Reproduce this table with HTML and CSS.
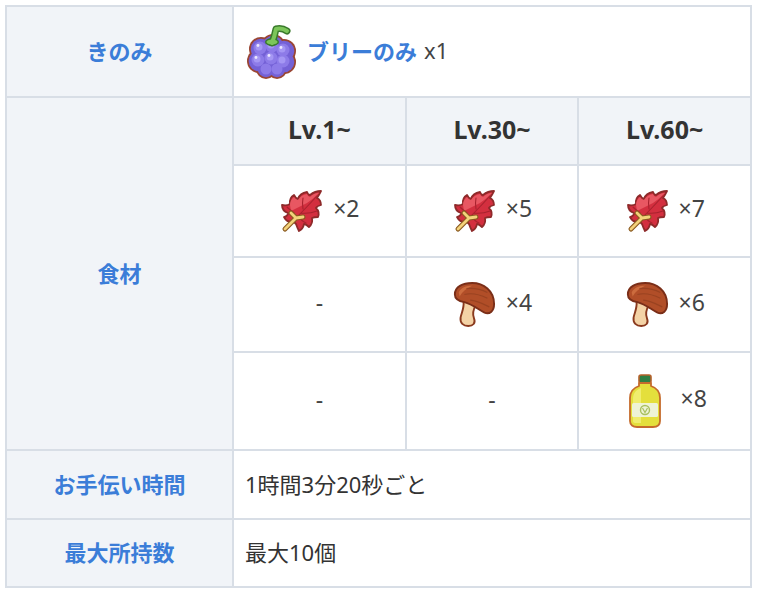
FILE: index.html
```html
<!DOCTYPE html>
<html lang="ja">
<head>
<meta charset="utf-8">
<title>ブリーのみ</title>
<link rel="stylesheet" href="styles.css">
</head>
<body>
<table class="info">
  <colgroup>
    <col class="c-label">
    <col class="c-lv">
    <col class="c-lv">
    <col class="c-lv">
  </colgroup>
  <tr class="r-berry">
    <th class="label">きのみ</th>
    <td class="value" colspan="3">
      <div class="berry">
        <svg class="ic-berry" viewBox="0 0 54 54" width="54" height="54">
          <g fill="#9a4634">
            <circle cx="16" cy="24" r="12"/><circle cx="28" cy="21" r="12"/><circle cx="39" cy="26" r="12"/>
            <circle cx="14" cy="36" r="12"/><circle cx="27" cy="35" r="12"/><circle cx="39" cy="37" r="12"/>
            <circle cx="21" cy="44" r="10"/><circle cx="32" cy="44" r="10"/>
          </g>
          <g fill="#7461d6">
            <circle cx="16" cy="24" r="10.3"/><circle cx="28" cy="21" r="10.3"/><circle cx="39" cy="26" r="10.3"/>
            <circle cx="14" cy="36" r="10.3"/><circle cx="27" cy="35" r="10.3"/><circle cx="39" cy="37" r="10.3"/>
            <circle cx="21" cy="44" r="8.3"/><circle cx="32" cy="44" r="8.3"/>
          </g>
          <g fill="#8d7be8">
            <circle cx="15" cy="23" r="6.5"/><circle cx="27" cy="21" r="6.5"/><circle cx="38" cy="25" r="6.5"/>
            <circle cx="13" cy="35" r="6.5"/><circle cx="26" cy="33" r="6.5"/><circle cx="38" cy="36" r="6.5"/>
            <circle cx="21" cy="44" r="5.5"/><circle cx="32" cy="44" r="5.5"/>
          </g>
          <g fill="#a597f4">
            <circle cx="14" cy="22" r="3.5"/><circle cx="26" cy="20" r="3.5"/><circle cx="37" cy="24" r="3.5"/>
            <circle cx="12" cy="34" r="3.5"/><circle cx="25" cy="32" r="3.5"/><circle cx="37" cy="35" r="3.5"/>
          </g>
          <g fill="#ece8ff">
            <circle cx="13" cy="20.5" r="1.4"/><circle cx="25" cy="18.5" r="1.4"/><circle cx="36" cy="22.5" r="1.4"/>
            <circle cx="11" cy="32.5" r="1.4"/><circle cx="24" cy="30.5" r="1.4"/>
          </g>
          <path d="M27 18 C29 13 30 9 31 4 C35 3 39 4 42 6" fill="none" stroke="#3a7a2c" stroke-width="7" stroke-linecap="round" stroke-linejoin="round"/>
          <ellipse cx="27" cy="17" rx="7" ry="4" fill="#3a7a2c"/>
          <path d="M27 18 C29 13 30 9 31 4 C35 3 39 4 42 6" fill="none" stroke="#7cc65a" stroke-width="4" stroke-linecap="round" stroke-linejoin="round"/>
          <ellipse cx="27" cy="17" rx="5.5" ry="2.6" fill="#7cc65a"/>
        </svg>
        <span class="berry-name">ブリーのみ</span><span class="qty">x1</span>
      </div>
    </td>
  </tr>
  <tr class="r-lv">
    <th class="label" rowspan="4">食材</th>
    <th class="lv">Lv.1~</th>
    <th class="lv">Lv.30~</th>
    <th class="lv">Lv.60~</th>
  </tr>
  <tr class="r-ing1">
    <td class="ing"><div class="item"><svg class="ic-leaf" viewBox="0 0 44 44" width="44" height="44"><use href="#leaf"/></svg><span>×2</span></div></td>
    <td class="ing"><div class="item"><svg class="ic-leaf" viewBox="0 0 44 44" width="44" height="44"><use href="#leaf"/></svg><span>×5</span></div></td>
    <td class="ing"><div class="item"><svg class="ic-leaf" viewBox="0 0 44 44" width="44" height="44"><use href="#leaf"/></svg><span>×7</span></div></td>
  </tr>
  <tr class="r-ing2">
    <td class="ing dash">-</td>
    <td class="ing"><div class="item"><svg class="ic-mush" viewBox="-1 -1 46 48" width="44" height="46"><use href="#mush"/></svg><span>×4</span></div></td>
    <td class="ing"><div class="item"><svg class="ic-mush" viewBox="-1 -1 46 48" width="44" height="46"><use href="#mush"/></svg><span>×6</span></div></td>
  </tr>
  <tr class="r-ing3">
    <td class="ing dash">-</td>
    <td class="ing dash">-</td>
    <td class="ing"><div class="item"><svg class="ic-oil" viewBox="0 0 44 56" width="44" height="56"><use href="#oil"/></svg><span>×8</span></div></td>
  </tr>
  <tr class="r-time">
    <th class="label">お手伝い時間</th>
    <td class="value" colspan="3">1時間3分20秒ごと</td>
  </tr>
  <tr class="r-max">
    <th class="label">最大所持数</th>
    <td class="value" colspan="3">最大10個</td>
  </tr>
</table>

<svg class="defs" width="0" height="0" aria-hidden="true">
  <defs>
    <g id="leaf">
      <path d="M15 33 Q8 34 5 28 Q9 27 9 24 Q3 22 3 16 Q8 17 11 15 Q10 9 15 6 Q17 10 19 10 Q21 4 28 3 Q29 6 31 6 Q36 2 42 2 Q40 6 38 9 Q42 11 42 16 Q38 17 37 19 Q41 23 39 28 Q35 28 33 29 Q34 35 30 38 Q27 35 25 35 Q24 40 20 42 Q18 38 17 35 Z" fill="#d32f3f" stroke="#8e2a2a" stroke-width="1.8" stroke-linejoin="round"/>
      <path d="M11 16 Q11 11 15 8 Q17 11 19 11 Q22 6 28 5 Q29 8 31 8 Q35 4 40 4 Q34 10 28 14 Q20 18 12 22 Z" fill="#e85762"/>
      <path d="M17 29 Q26 20 38 7 M22 24 Q30 25 38 22 M20 27 Q22 32 27 34 M15 24 Q10 20 8 18 M24 20 Q23 14 24 9" fill="none" stroke="#a8222e" stroke-width="1.1" stroke-linecap="round"/>
      <path d="M6 40 L17 29 M17 29 L12 24 M17 29 L24 28" fill="none" stroke="#8a5a20" stroke-width="5" stroke-linecap="round"/>
      <path d="M6 40 L17 29 M17 29 L12 24 M17 29 L24 28" fill="none" stroke="#f3d27a" stroke-width="2.8" stroke-linecap="round"/>
    </g>
    <g id="mush">
      <path d="M11 19 C12 26 9 31 8 36 C7 42 11 45 16 45 C21 45 24 42 22 37 C20 32 21 28 24 23 Z" fill="#f4d3a6" stroke="#8a3a1e" stroke-width="2" stroke-linejoin="round"/>
      <path d="M2 12 C2 4 10 0 20 0 C32 0 43 8 43 22 C43 30 38 33 33 31 C27 28 20 22 12 20 C6 19 2 17 2 12 Z" fill="#b14e28" stroke="#7a2e18" stroke-width="2" stroke-linejoin="round"/>
      <path d="M6 10 C8 5 14 3 20 3 C14 6 10 9 7 14 Z" fill="#cc6c3e"/>
      <path d="M12 12 C20 10 28 12 36 16 M18 18 C24 18 30 21 38 25 M14 6 C22 5 30 7 36 10" fill="none" stroke="#94401f" stroke-width="1.3" opacity="0.8"/>
    </g>
    <g id="oil">
      <rect x="16" y="2" width="12" height="8" rx="2" fill="#2f7f44" stroke="#b5612a" stroke-width="1.6"/>
      <path d="M16 10 L28 10 L28 13 C34 15 37 19 37 25 L37 48 C37 52 34 54 30 54 L14 54 C10 54 7 52 7 48 L7 25 C7 19 10 15 16 13 Z" fill="#e4df3c" stroke="#c56b2c" stroke-width="1.8" stroke-linejoin="round"/>
      <path d="M10 26 C10 20 13 17 18 15 L18 50 L12 50 C11 50 10 49 10 48 Z" fill="#f3f07a" opacity="0.8"/>
      <rect x="9" y="30" width="26" height="14" rx="1.5" fill="#eef3d6"/>
      <circle cx="22" cy="37" r="4.5" fill="none" stroke="#a9c060" stroke-width="1.4"/>
      <path d="M19.5 35 L22 39.5 L24.5 35" fill="none" stroke="#a9c060" stroke-width="1.2"/>
    </g>
  </defs>
</svg>
</body>
</html>
```

FILE: styles.css
```css
html, body {
  margin: 0;
  padding: 0;
  background: #ffffff;
}
body {
  padding: 5px 0 0 5px;
  font-family: "Noto Sans", "Noto Sans CJK JP", sans-serif;
  color: #333333;
}
.info {
  border-collapse: collapse;
  table-layout: fixed;
  width: 747px;
}
.c-label { width: 227px; }
.info th, .info td {
  border: 2px solid #d8dee6;
  padding: 0 0 4px 0;
  vertical-align: middle;
}
.label {
  background: #f1f4f8;
  color: #3b7dd8;
  font-weight: 700;
  font-size: 22px;
  text-align: center;
}
.info .value {
  text-align: left;
  padding-left: 11px;
  font-size: 22px;
  color: #333333;
}
.info .r-berry .value { padding-bottom: 0; }
.r-berry { height: 91px; }
.r-lv { height: 68px; }
.r-ing1 { height: 92px; }
.r-ing2 { height: 95px; }
.r-ing3 { height: 98px; }
.r-time { height: 69px; }
.r-max { height: 68px; }
.berry {
  display: flex;
  align-items: center;
}
.ic-berry { margin-right: 8px; }
.berry-name {
  color: #3b7dd8;
  font-weight: 700;
  font-size: 22px;
  margin-right: 7px;
  position: relative;
  top: -2px;
}
.qty {
  font-size: 22px;
  color: #444444;
  position: relative;
  top: -2px;
}
.lv {
  background: #f1f4f8;
  color: #333333;
  font-weight: 700;
  font-size: 25px;
  text-align: center;
}
.ing {
  text-align: center;
  font-size: 23px;
  color: #444444;
}
.item {
  display: flex;
  align-items: center;
  justify-content: center;
  gap: 10px;
}
.item span {
  position: relative;
  top: -3px;
}
.info .r-ing1 .ing,
.info .r-ing2 .ing,
.info .r-ing3 .ing { padding-bottom: 0; }
.info .r-ing2 .dash,
.info .r-ing3 .dash { padding-bottom: 5px; }
.ic-oil { margin-right: 4px; }
.defs {
  position: absolute;
  width: 0;
  height: 0;
}
```
